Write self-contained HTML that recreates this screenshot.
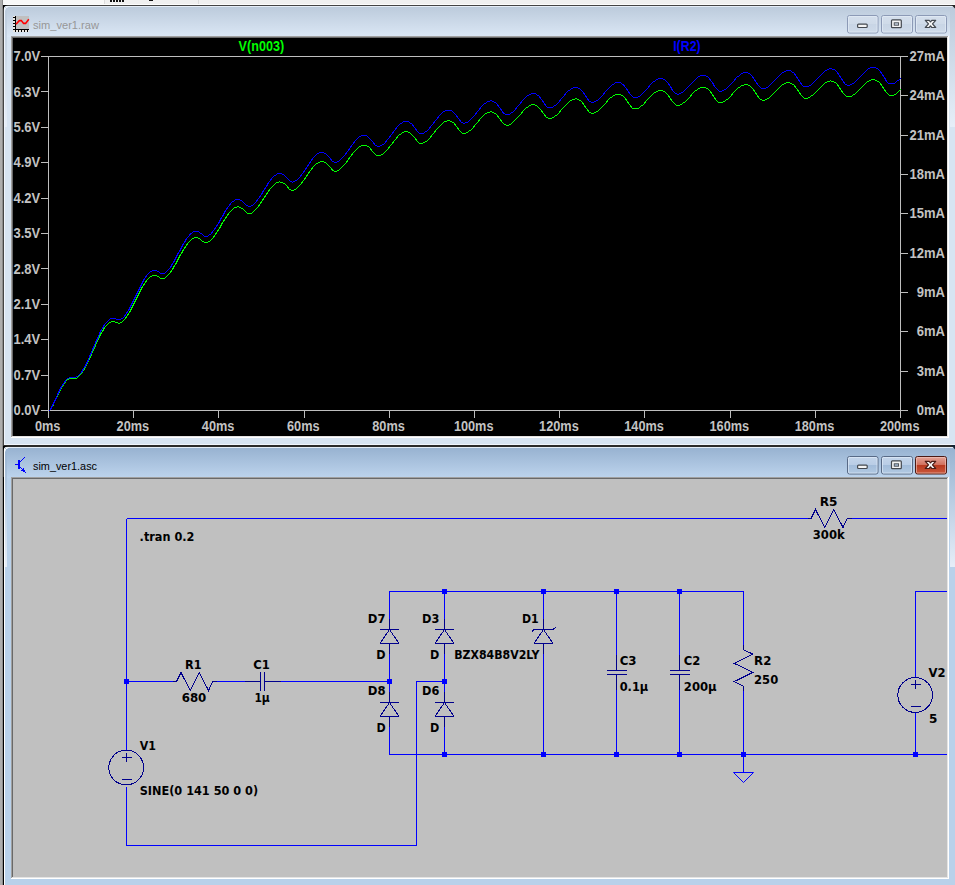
<!DOCTYPE html>
<html><head><meta charset="utf-8"><title>sim_ver1</title>
<style>
html,body{margin:0;padding:0;}
body{width:955px;height:885px;overflow:hidden;background:#f0f0f0;position:relative;font-family:"Liberation Sans",sans-serif;}
svg{position:absolute;left:0;top:0;}
.ax{stroke:#bebebe;stroke-width:1;shape-rendering:crispEdges;fill:none}
.pl{font-family:"Liberation Sans",sans-serif;font-weight:bold;font-size:13px;fill:#c3c3c3}
.w{stroke:#0000ff;stroke-width:1;fill:none;shape-rendering:crispEdges}
.s{stroke:#00008c;stroke-width:1;fill:none;shape-rendering:crispEdges}
.sc{stroke:#00008c;stroke-width:1;fill:none;shape-rendering:crispEdges}
.j{fill:#0000ff;shape-rendering:crispEdges}
.t{font-family:"DejaVu Sans","Liberation Sans",sans-serif;font-weight:bold;font-size:12px;fill:#000}
.tt{font-family:"Liberation Sans",sans-serif;font-size:11.5px}
</style></head><body>
<svg width="955" height="885" viewBox="0 0 955 885">
<defs>
<linearGradient id="t1" x1="0" y1="0" x2="0" y2="1"><stop offset="0" stop-color="#bac9da"/><stop offset="1" stop-color="#dbe7f5"/></linearGradient>
<linearGradient id="t2" x1="0" y1="0" x2="0" y2="1"><stop offset="0" stop-color="#94afce"/><stop offset="1" stop-color="#bdd4ed"/></linearGradient>
<linearGradient id="s2" x1="0" y1="0" x2="0" y2="1"><stop offset="0" stop-color="#98b3d1"/><stop offset="1" stop-color="#e6eef8"/></linearGradient>
<linearGradient id="s1" x1="0" y1="0" x2="0" y2="1"><stop offset="0" stop-color="#bccbdc"/><stop offset="1" stop-color="#e6eef8"/></linearGradient>
<linearGradient id="b1" x1="0" y1="0" x2="0" y2="1"><stop offset="0" stop-color="#d4dfec"/><stop offset="0.5" stop-color="#cfdbe9"/><stop offset="0.5" stop-color="#c8d5e5"/><stop offset="1" stop-color="#cfdbea"/></linearGradient>
<linearGradient id="b2" x1="0" y1="0" x2="0" y2="1"><stop offset="0" stop-color="#c4d5ea"/><stop offset="0.48" stop-color="#b9cde6"/><stop offset="0.5" stop-color="#a2bcda"/><stop offset="1" stop-color="#b3cae3"/></linearGradient>
<linearGradient id="bx" x1="0" y1="0" x2="0" y2="1"><stop offset="0" stop-color="#e4a79c"/><stop offset="0.48" stop-color="#d1705d"/><stop offset="0.5" stop-color="#b8391f"/><stop offset="1" stop-color="#cb5a3f"/></linearGradient>
</defs>

<g shape-rendering="crispEdges">
<rect x="0" y="0" width="955" height="4" fill="#f0f0f0"/><rect x="0" y="4" width="955" height="1" fill="#fdfdfd"/>
<rect x="3" y="0" width="101" height="4" fill="#f8f8f8"/>
<rect x="104" y="0" width="1" height="4" fill="#dcdcdc"/><rect x="198" y="0" width="1" height="4" fill="#dcdcdc"/>
<rect x="110" y="0" width="2" height="2" fill="#111"/>
<rect x="113" y="0" width="2" height="2" fill="#111"/>
<rect x="116" y="0" width="2" height="2" fill="#111"/>
<rect x="119" y="0" width="2" height="2" fill="#111"/>
<rect x="122" y="0" width="2" height="2" fill="#111"/>
<rect x="149" y="0" width="4" height="1" fill="#111"/>
<rect x="3" y="5" width="952" height="440" fill="#d7e4f2"/>
<rect x="3" y="5" width="952" height="32" fill="url(#t1)"/>
<rect x="3" y="5" width="952" height="1" fill="#444"/>
<rect x="4" y="6" width="951" height="1" fill="#e6eef8"/>
<rect x="4" y="444" width="951" height="1" fill="#f0f5fc"/>
<rect x="3" y="445" width="952" height="440" fill="#b9d1ea"/>
<rect x="3" y="445" width="952" height="33" fill="url(#t2)"/>
<rect x="3" y="445" width="952" height="2" fill="#2a2a2a"/>
<rect x="4" y="447" width="951" height="1" fill="#e3edf8"/>
<rect x="0" y="0" width="2" height="885" fill="#adadad"/><rect x="2" y="0" width="1" height="885" fill="#8c8c8c"/>
<rect x="3" y="5" width="1" height="440" fill="#444"/>
<rect x="3" y="445" width="1" height="32" fill="#303030"/><rect x="3" y="477" width="1" height="408" fill="#000"/>
<rect x="4" y="7" width="1" height="438" fill="#f0f5fc"/>
<rect x="4" y="448" width="1" height="437" fill="#fff"/>
<rect x="5" y="7" width="2" height="120" fill="url(#s1)"/><rect x="950" y="7" width="5" height="120" fill="url(#s1)"/>
<rect x="5" y="448" width="2" height="119" fill="url(#s2)"/><rect x="950" y="448" width="5" height="119" fill="url(#s2)"/>
<rect x="11" y="36" width="938" height="402" fill="#fff"/>
<rect x="11" y="36" width="937" height="401" fill="#a0a0a0"/>
<rect x="12" y="37" width="936" height="400" fill="#e3e3e3"/>
<rect x="12" y="37" width="935" height="399" fill="#696969"/>
<rect x="13" y="38" width="934" height="398" fill="#000"/>
<rect x="11" y="477" width="938" height="402" fill="#fff"/>
<rect x="11" y="477" width="937" height="401" fill="#a0a0a0"/>
<rect x="12" y="478" width="936" height="400" fill="#e3e3e3"/>
<rect x="12" y="478" width="935" height="399" fill="#696969"/>
<rect x="13" y="479" width="934" height="398" fill="#c0c0c0"/>
</g>
<path d="M955 5v3.5l-3.5-3.5z" fill="#222"/><path d="M955 445v4.5l-4-4.5z" fill="#123"/>
<path d="M3 5h5q-4 0.6-5 5z" fill="#000"/><path d="M3 446h5q-4 0.6-5 5z" fill="#000"/>
<path d="M8.5 6.5q-3.6 0.6-4 4.5" fill="none" stroke="#eef3fa" stroke-width="1"/><path d="M8.5 447.5q-3.6 0.6-4 4.5" fill="none" stroke="#fff" stroke-width="1"/>
<g shape-rendering="crispEdges"><rect x="13" y="16" width="3" height="16" fill="#ece8e2"/><rect x="13" y="30" width="16" height="2" fill="#ece8e2"/><rect x="16" y="16" width="13" height="13" fill="#c0c0c0"/><rect x="15" y="16" width="1" height="16" fill="#000"/><rect x="13" y="29" width="16" height="1" fill="#000"/>
<rect x="13" y="17" width="2" height="1" fill="#000"/>
<rect x="13" y="20" width="2" height="1" fill="#000"/>
<rect x="13" y="23" width="2" height="1" fill="#000"/>
<rect x="13" y="26" width="2" height="1" fill="#000"/>
<rect x="18" y="30" width="1" height="2" fill="#000"/>
<rect x="21" y="30" width="1" height="2" fill="#000"/>
<rect x="24" y="30" width="1" height="2" fill="#000"/>
<rect x="27" y="30" width="1" height="2" fill="#000"/>
</g><polyline points="16,24.3 19.3,20.6 21.3,20.6 23.6,23.4 25.6,23.4 28.8,19.3" stroke="#f00" stroke-width="1.6" fill="none"/>
<text class="tt" x="33" y="28.5" fill="#979797" textLength="66" lengthAdjust="spacingAndGlyphs">sim_ver1.raw</text>
<g fill="#0000ff" shape-rendering="crispEdges"><rect x="18" y="460" width="2" height="9"/><rect x="15" y="464" width="1" height="1"/><rect x="16" y="464" width="1" height="1"/><rect x="17" y="464" width="1" height="1"/><rect x="20" y="461" width="1" height="1"/><rect x="21" y="460" width="1" height="1"/><rect x="22" y="459" width="1" height="1"/><rect x="23" y="458" width="1" height="1"/><rect x="24" y="457" width="1" height="1"/><rect x="20" y="467" width="1" height="1"/><rect x="21" y="468" width="1" height="1"/><rect x="22" y="469" width="1" height="1"/><rect x="23" y="470" width="1" height="1"/><rect x="24" y="471" width="1" height="1"/><rect x="25" y="472" width="1" height="1"/><rect x="21" y="470" width="1" height="1"/><rect x="22" y="470" width="1" height="1"/><rect x="24" y="470" width="1" height="1"/><rect x="23" y="468" width="1" height="1"/><rect x="23" y="469" width="1" height="1"/><rect x="23" y="471" width="1" height="1"/></g>
<text class="tt" x="33" y="469.7" fill="#000" textLength="64" lengthAdjust="spacingAndGlyphs">sim_ver1.asc</text>
<rect x="847.5" y="15.5" width="30.5" height="17.5" rx="2" fill="url(#b1)" stroke="#8c9ab6" stroke-width="1"/>
<rect x="848.5" y="16.5" width="28.5" height="15.5" rx="1" fill="none" stroke="#e6eef8" stroke-opacity="0.6" stroke-width="1"/>
<rect x="881.5" y="15.5" width="31.0" height="17.5" rx="2" fill="url(#b1)" stroke="#8c9ab6" stroke-width="1"/>
<rect x="882.5" y="16.5" width="29.0" height="15.5" rx="1" fill="none" stroke="#e6eef8" stroke-opacity="0.6" stroke-width="1"/>
<rect x="915.5" y="15.5" width="31.0" height="17.5" rx="2" fill="url(#b1)" stroke="#8c9ab6" stroke-width="1"/>
<rect x="916.5" y="16.5" width="29.0" height="15.5" rx="1" fill="none" stroke="#e6eef8" stroke-opacity="0.6" stroke-width="1"/>
<rect x="857.6" y="24.1" width="9.6" height="3.4" rx="0.9" fill="#f4f4f4" stroke="#43484f" stroke-width="1.2"/>
<rect x="891.5" y="19.9" width="9.8" height="7.8" rx="0.9" fill="#f4f4f4" stroke="#43484f" stroke-width="1.2"/>
<rect x="894.2" y="22.8" width="4.4" height="2.4" fill="#c7d3e2" stroke="#43484f" stroke-width="0.9"/>
<g transform="translate(930.5 23.9)"><path d="M-5.2 -3.6h3.9l1.3 1.6 1.3-1.6h3.9l-3.2 3.6 3.2 3.6h-3.9l-1.3-1.6-1.3 1.6h-3.9l3.2-3.6z" fill="#f6f6f6" stroke="#43484f" stroke-width="1.2" stroke-linejoin="round"/></g>
<rect x="847.5" y="456.5" width="30.5" height="17.5" rx="2" fill="url(#b2)" stroke="#586a86" stroke-width="1"/>
<rect x="848.5" y="457.5" width="28.5" height="15.5" rx="1" fill="none" stroke="#e4eefa" stroke-opacity="0.6" stroke-width="1"/>
<rect x="881.5" y="456.5" width="31.0" height="17.5" rx="2" fill="url(#b2)" stroke="#586a86" stroke-width="1"/>
<rect x="882.5" y="457.5" width="29.0" height="15.5" rx="1" fill="none" stroke="#e4eefa" stroke-opacity="0.6" stroke-width="1"/>
<rect x="915.5" y="456.5" width="31.0" height="17.5" rx="2" fill="url(#bx)" stroke="#4b1a14" stroke-width="1"/>
<rect x="916.5" y="457.5" width="29.0" height="15.5" rx="1" fill="none" stroke="#f3c8c0" stroke-opacity="0.6" stroke-width="1"/>
<rect x="857.6" y="465.1" width="9.6" height="3.4" rx="0.9" fill="#f4f4f4" stroke="#43484f" stroke-width="1.2"/>
<rect x="891.5" y="460.9" width="9.8" height="7.8" rx="0.9" fill="#f4f4f4" stroke="#43484f" stroke-width="1.2"/>
<rect x="894.2" y="463.8" width="4.4" height="2.4" fill="#a9bdd6" stroke="#43484f" stroke-width="0.9"/>
<g transform="translate(930.5 464.9)"><path d="M-5.2 -3.6h3.9l1.3 1.6 1.3-1.6h3.9l-3.2 3.6 3.2 3.6h-3.9l-1.3-1.6-1.3 1.6h-3.9l3.2-3.6z" fill="#f6f6f6" stroke="#4a1c16" stroke-width="1.2" stroke-linejoin="round"/></g>
<g class="ax">
<path d="M41 56.5H908 M48.5 56.5V418 M900.5 56.5V418 M41 410.5H908"/>
<path d="M41 91.5H48.5 M41 127.5H48.5 M41 162.5H48.5 M41 198.5H48.5 M41 233.5H48.5 M41 268.5H48.5 M41 304.5H48.5 M41 339.5H48.5 M41 375.5H48.5 M900.5 371.5H908 M900.5 331.5H908 M900.5 292.5H908 M900.5 253.5H908 M900.5 213.5H908 M900.5 174.5H908 M900.5 135.5H908 M900.5 95.5H908 M133.5 410.5V418 M218.5 410.5V418 M304.5 410.5V418 M389.5 410.5V418 M474.5 410.5V418 M559.5 410.5V418 M644.5 410.5V418 M730.5 410.5V418 M815.5 410.5V418"/>
</g>
<polyline points="48.5,410.5 49.5,410.5 50.5,409.5 51.5,407.5 52.5,406.5 53.5,404.5 54.5,401.5 55.5,399.5 56.5,397.5 57.5,395.5 58.5,393.5 59.5,391.5 60.5,389.5 61.5,387.5 62.5,386.5 63.5,384.5 64.5,383.5 65.5,381.5 66.5,380.5 67.5,379.5 68.5,379.5 69.5,378.5 70.5,378.5 71.5,378.5 72.5,378.5 73.5,378.5 74.5,378.5 75.5,378.5 76.5,378.5 77.5,377.5 78.5,376.5 79.5,375.5 80.5,374.5 81.5,373.5 82.5,371.5 83.5,370.5 84.5,368.5 85.5,366.5 86.5,364.5 87.5,362.5 88.5,360.5 89.5,358.5 90.5,356.5 91.5,354.5 92.5,351.5 93.5,349.5 94.5,347.5 95.5,345.5 96.5,342.5 97.5,340.5 98.5,338.5 99.5,336.5 100.5,334.5 101.5,332.5 102.5,331.5 103.5,329.5 104.5,327.5 105.5,326.5 106.5,325.5 107.5,324.5 108.5,323.5 109.5,322.5 110.5,322.5 111.5,321.5 112.5,321.5 113.5,321.5 114.5,321.5 115.5,322.5 116.5,322.5 117.5,322.5 118.5,323.5 119.5,323.5 120.5,322.5 121.5,322.5 122.5,321.5 123.5,320.5 124.5,319.5 125.5,318.5 126.5,316.5 127.5,315.5 128.5,313.5 129.5,312.5 130.5,310.5 131.5,308.5 132.5,306.5 133.5,304.5 134.5,302.5 135.5,300.5 136.5,298.5 137.5,296.5 138.5,294.5 139.5,292.5 140.5,290.5 141.5,288.5 142.5,286.5 143.5,285.5 144.5,283.5 145.5,282.5 146.5,280.5 147.5,279.5 148.5,278.5 149.5,277.5 150.5,276.5 151.5,276.5 152.5,275.5 153.5,275.5 154.5,275.5 155.5,275.5 156.5,275.5 157.5,276.5 158.5,276.5 159.5,277.5 160.5,278.5 161.5,278.5 162.5,278.5 163.5,278.5 164.5,278.5 165.5,277.5 166.5,276.5 167.5,275.5 168.5,274.5 169.5,273.5 170.5,272.5 171.5,270.5 172.5,269.5 173.5,267.5 174.5,265.5 175.5,264.5 176.5,262.5 177.5,260.5 178.5,258.5 179.5,256.5 180.5,254.5 181.5,253.5 182.5,251.5 183.5,249.5 184.5,248.5 185.5,246.5 186.5,245.5 187.5,243.5 188.5,242.5 189.5,241.5 190.5,240.5 191.5,239.5 192.5,238.5 193.5,238.5 194.5,237.5 195.5,237.5 196.5,237.5 197.5,237.5 198.5,238.5 199.5,238.5 200.5,239.5 201.5,240.5 202.5,241.5 203.5,241.5 204.5,242.5 205.5,242.5 206.5,242.5 207.5,242.5 208.5,241.5 209.5,241.5 210.5,240.5 211.5,239.5 212.5,238.5 213.5,237.5 214.5,235.5 215.5,234.5 216.5,232.5 217.5,231.5 218.5,229.5 219.5,228.5 220.5,226.5 221.5,224.5 222.5,222.5 223.5,221.5 224.5,219.5 225.5,218.5 226.5,216.5 227.5,215.5 228.5,213.5 229.5,212.5 230.5,211.5 231.5,210.5 232.5,209.5 233.5,208.5 234.5,207.5 235.5,207.5 236.5,207.5 237.5,206.5 238.5,206.5 239.5,207.5 240.5,207.5 241.5,208.5 242.5,208.5 243.5,209.5 244.5,210.5 245.5,211.5 246.5,212.5 247.5,213.5 248.5,213.5 249.5,213.5 250.5,213.5 251.5,213.5 252.5,212.5 253.5,211.5 254.5,210.5 255.5,209.5 256.5,208.5 257.5,207.5 258.5,206.5 259.5,204.5 260.5,203.5 261.5,201.5 262.5,200.5 263.5,198.5 264.5,197.5 265.5,195.5 266.5,194.5 267.5,192.5 268.5,191.5 269.5,189.5 270.5,188.5 271.5,187.5 272.5,186.5 273.5,185.5 274.5,184.5 275.5,183.5 276.5,182.5 277.5,182.5 278.5,182.5 279.5,181.5 280.5,182.5 281.5,182.5 282.5,182.5 283.5,183.5 284.5,183.5 285.5,184.5 286.5,185.5 287.5,186.5 288.5,188.5 289.5,189.5 290.5,189.5 291.5,190.5 292.5,190.5 293.5,190.5 294.5,189.5 295.5,189.5 296.5,188.5 297.5,187.5 298.5,186.5 299.5,185.5 300.5,184.5 301.5,183.5 302.5,181.5 303.5,180.5 304.5,179.5 305.5,177.5 306.5,176.5 307.5,174.5 308.5,173.5 309.5,171.5 310.5,170.5 311.5,169.5 312.5,167.5 313.5,166.5 314.5,165.5 315.5,164.5 316.5,163.5 317.5,163.5 318.5,162.5 319.5,162.5 320.5,161.5 321.5,161.5 322.5,161.5 323.5,161.5 324.5,162.5 325.5,162.5 326.5,163.5 327.5,164.5 328.5,165.5 329.5,166.5 330.5,167.5 331.5,168.5 332.5,170.5 333.5,170.5 334.5,171.5 335.5,171.5 336.5,171.5 337.5,170.5 338.5,170.5 339.5,169.5 340.5,168.5 341.5,167.5 342.5,166.5 343.5,165.5 344.5,164.5 345.5,163.5 346.5,162.5 347.5,160.5 348.5,159.5 349.5,157.5 350.5,156.5 351.5,155.5 352.5,153.5 353.5,152.5 354.5,151.5 355.5,150.5 356.5,149.5 357.5,148.5 358.5,147.5 359.5,146.5 360.5,146.5 361.5,145.5 362.5,145.5 363.5,145.5 364.5,145.5 365.5,145.5 366.5,145.5 367.5,146.5 368.5,146.5 369.5,147.5 370.5,148.5 371.5,150.5 372.5,151.5 373.5,152.5 374.5,153.5 375.5,154.5 376.5,155.5 377.5,155.5 378.5,155.5 379.5,155.5 380.5,155.5 381.5,154.5 382.5,154.5 383.5,153.5 384.5,152.5 385.5,151.5 386.5,150.5 387.5,149.5 388.5,148.5 389.5,146.5 390.5,145.5 391.5,144.5 392.5,143.5 393.5,141.5 394.5,140.5 395.5,139.5 396.5,138.5 397.5,136.5 398.5,135.5 399.5,134.5 400.5,134.5 401.5,133.5 402.5,132.5 403.5,132.5 404.5,131.5 405.5,131.5 406.5,131.5 407.5,131.5 408.5,132.5 409.5,132.5 410.5,133.5 411.5,134.5 412.5,135.5 413.5,136.5 414.5,137.5 415.5,138.5 416.5,140.5 417.5,141.5 418.5,142.5 419.5,143.5 420.5,143.5 421.5,143.5 422.5,143.5 423.5,142.5 424.5,142.5 425.5,141.5 426.5,141.5 427.5,140.5 428.5,139.5 429.5,138.5 430.5,137.5 431.5,135.5 432.5,134.5 433.5,133.5 434.5,132.5 435.5,130.5 436.5,129.5 437.5,128.5 438.5,127.5 439.5,126.5 440.5,125.5 441.5,124.5 442.5,123.5 443.5,122.5 444.5,121.5 445.5,121.5 446.5,121.5 447.5,120.5 448.5,120.5 449.5,120.5 450.5,121.5 451.5,121.5 452.5,122.5 453.5,122.5 454.5,123.5 455.5,125.5 456.5,126.5 457.5,127.5 458.5,129.5 459.5,130.5 460.5,131.5 461.5,132.5 462.5,133.5 463.5,133.5 464.5,133.5 465.5,133.5 466.5,132.5 467.5,132.5 468.5,131.5 469.5,130.5 470.5,130.5 471.5,129.5 472.5,128.5 473.5,127.5 474.5,125.5 475.5,124.5 476.5,123.5 477.5,122.5 478.5,121.5 479.5,119.5 480.5,118.5 481.5,117.5 482.5,116.5 483.5,115.5 484.5,114.5 485.5,113.5 486.5,113.5 487.5,112.5 488.5,112.5 489.5,112.5 490.5,111.5 491.5,111.5 492.5,112.5 493.5,112.5 494.5,113.5 495.5,113.5 496.5,114.5 497.5,115.5 498.5,117.5 499.5,118.5 500.5,119.5 501.5,121.5 502.5,122.5 503.5,123.5 504.5,124.5 505.5,124.5 506.5,125.5 507.5,125.5 508.5,125.5 509.5,124.5 510.5,124.5 511.5,123.5 512.5,122.5 513.5,121.5 514.5,120.5 515.5,119.5 516.5,118.5 517.5,117.5 518.5,116.5 519.5,115.5 520.5,114.5 521.5,113.5 522.5,111.5 523.5,110.5 524.5,109.5 525.5,108.5 526.5,107.5 527.5,107.5 528.5,106.5 529.5,105.5 530.5,105.5 531.5,104.5 532.5,104.5 533.5,104.5 534.5,104.5 535.5,105.5 536.5,105.5 537.5,106.5 538.5,107.5 539.5,108.5 540.5,109.5 541.5,110.5 542.5,112.5 543.5,113.5 544.5,114.5 545.5,116.5 546.5,117.5 547.5,117.5 548.5,118.5 549.5,118.5 550.5,118.5 551.5,118.5 552.5,117.5 553.5,117.5 554.5,116.5 555.5,115.5 556.5,115.5 557.5,114.5 558.5,113.5 559.5,112.5 560.5,110.5 561.5,109.5 562.5,108.5 563.5,107.5 564.5,106.5 565.5,105.5 566.5,104.5 567.5,103.5 568.5,102.5 569.5,101.5 570.5,100.5 571.5,100.5 572.5,99.5 573.5,99.5 574.5,99.5 575.5,98.5 576.5,98.5 577.5,99.5 578.5,99.5 579.5,100.5 580.5,100.5 581.5,101.5 582.5,102.5 583.5,104.5 584.5,105.5 585.5,107.5 586.5,108.5 587.5,109.5 588.5,111.5 589.5,112.5 590.5,112.5 591.5,113.5 592.5,113.5 593.5,113.5 594.5,112.5 595.5,112.5 596.5,111.5 597.5,111.5 598.5,110.5 599.5,109.5 600.5,108.5 601.5,107.5 602.5,106.5 603.5,105.5 604.5,104.5 605.5,103.5 606.5,102.5 607.5,100.5 608.5,99.5 609.5,98.5 610.5,97.5 611.5,97.5 612.5,96.5 613.5,95.5 614.5,95.5 615.5,94.5 616.5,94.5 617.5,94.5 618.5,94.5 619.5,94.5 620.5,94.5 621.5,95.5 622.5,95.5 623.5,96.5 624.5,97.5 625.5,98.5 626.5,100.5 627.5,101.5 628.5,103.5 629.5,104.5 630.5,105.5 631.5,107.5 632.5,108.5 633.5,108.5 634.5,108.5 635.5,108.5 636.5,108.5 637.5,108.5 638.5,108.5 639.5,107.5 640.5,106.5 641.5,105.5 642.5,105.5 643.5,104.5 644.5,103.5 645.5,101.5 646.5,100.5 647.5,99.5 648.5,98.5 649.5,97.5 650.5,96.5 651.5,95.5 652.5,94.5 653.5,93.5 654.5,92.5 655.5,92.5 656.5,91.5 657.5,91.5 658.5,90.5 659.5,90.5 660.5,90.5 661.5,90.5 662.5,90.5 663.5,91.5 664.5,91.5 665.5,92.5 666.5,93.5 667.5,94.5 668.5,95.5 669.5,97.5 670.5,98.5 671.5,100.5 672.5,101.5 673.5,102.5 674.5,103.5 675.5,104.5 676.5,105.5 677.5,105.5 678.5,105.5 679.5,105.5 680.5,104.5 681.5,104.5 682.5,103.5 683.5,102.5 684.5,102.5 685.5,101.5 686.5,100.5 687.5,99.5 688.5,98.5 689.5,97.5 690.5,96.5 691.5,94.5 692.5,93.5 693.5,92.5 694.5,91.5 695.5,90.5 696.5,90.5 697.5,89.5 698.5,88.5 699.5,88.5 700.5,87.5 701.5,87.5 702.5,87.5 703.5,87.5 704.5,87.5 705.5,87.5 706.5,88.5 707.5,88.5 708.5,89.5 709.5,90.5 710.5,91.5 711.5,93.5 712.5,94.5 713.5,96.5 714.5,97.5 715.5,99.5 716.5,100.5 717.5,101.5 718.5,102.5 719.5,102.5 720.5,102.5 721.5,102.5 722.5,102.5 723.5,101.5 724.5,101.5 725.5,100.5 726.5,99.5 727.5,99.5 728.5,98.5 729.5,97.5 730.5,96.5 731.5,95.5 732.5,93.5 733.5,92.5 734.5,91.5 735.5,90.5 736.5,89.5 737.5,88.5 738.5,87.5 739.5,87.5 740.5,86.5 741.5,85.5 742.5,85.5 743.5,85.5 744.5,84.5 745.5,84.5 746.5,84.5 747.5,84.5 748.5,85.5 749.5,85.5 750.5,86.5 751.5,87.5 752.5,88.5 753.5,89.5 754.5,91.5 755.5,92.5 756.5,94.5 757.5,95.5 758.5,97.5 759.5,98.5 760.5,99.5 761.5,99.5 762.5,100.5 763.5,100.5 764.5,100.5 765.5,99.5 766.5,99.5 767.5,98.5 768.5,98.5 769.5,97.5 770.5,96.5 771.5,95.5 772.5,94.5 773.5,93.5 774.5,92.5 775.5,91.5 776.5,90.5 777.5,89.5 778.5,88.5 779.5,87.5 780.5,86.5 781.5,85.5 782.5,84.5 783.5,84.5 784.5,83.5 785.5,83.5 786.5,82.5 787.5,82.5 788.5,82.5 789.5,82.5 790.5,83.5 791.5,83.5 792.5,84.5 793.5,84.5 794.5,85.5 795.5,87.5 796.5,88.5 797.5,89.5 798.5,91.5 799.5,92.5 800.5,94.5 801.5,95.5 802.5,96.5 803.5,97.5 804.5,98.5 805.5,98.5 806.5,98.5 807.5,98.5 808.5,97.5 809.5,97.5 810.5,96.5 811.5,95.5 812.5,95.5 813.5,94.5 814.5,93.5 815.5,92.5 816.5,91.5 817.5,90.5 818.5,89.5 819.5,88.5 820.5,87.5 821.5,86.5 822.5,85.5 823.5,84.5 824.5,83.5 825.5,82.5 826.5,82.5 827.5,81.5 828.5,81.5 829.5,81.5 830.5,80.5 831.5,81.5 832.5,81.5 833.5,81.5 834.5,82.5 835.5,82.5 836.5,83.5 837.5,84.5 838.5,86.5 839.5,87.5 840.5,89.5 841.5,90.5 842.5,92.5 843.5,93.5 844.5,94.5 845.5,95.5 846.5,96.5 847.5,96.5 848.5,96.5 849.5,96.5 850.5,96.5 851.5,96.5 852.5,95.5 853.5,94.5 854.5,94.5 855.5,93.5 856.5,92.5 857.5,91.5 858.5,90.5 859.5,89.5 860.5,88.5 861.5,87.5 862.5,86.5 863.5,85.5 864.5,84.5 865.5,83.5 866.5,82.5 867.5,81.5 868.5,81.5 869.5,80.5 870.5,80.5 871.5,79.5 872.5,79.5 873.5,79.5 874.5,79.5 875.5,80.5 876.5,80.5 877.5,81.5 878.5,81.5 879.5,82.5 880.5,83.5 881.5,85.5 882.5,86.5 883.5,88.5 884.5,89.5 885.5,91.5 886.5,92.5 887.5,93.5 888.5,94.5 889.5,95.5 890.5,95.5 891.5,95.5 892.5,95.5 893.5,95.5 894.5,94.5 895.5,94.5 896.5,93.5 897.5,92.5 898.5,91.5 899.5,90.5 900.5,89.5" fill="none" stroke="#00ff00" stroke-width="1" shape-rendering="crispEdges"/>
<polyline points="48.5,410.5 49.5,410.5 50.5,409.5 51.5,407.5 52.5,405.5 53.5,403.5 54.5,401.5 55.5,399.5 56.5,397.5 57.5,394.5 58.5,392.5 59.5,390.5 60.5,388.5 61.5,386.5 62.5,385.5 63.5,383.5 64.5,382.5 65.5,380.5 66.5,379.5 67.5,378.5 68.5,378.5 69.5,377.5 70.5,377.5 71.5,377.5 72.5,377.5 73.5,377.5 74.5,377.5 75.5,377.5 76.5,376.5 77.5,376.5 78.5,375.5 79.5,374.5 80.5,373.5 81.5,372.5 82.5,370.5 83.5,368.5 84.5,367.5 85.5,365.5 86.5,363.5 87.5,361.5 88.5,359.5 89.5,356.5 90.5,354.5 91.5,352.5 92.5,349.5 93.5,347.5 94.5,345.5 95.5,342.5 96.5,340.5 97.5,338.5 98.5,336.5 99.5,333.5 100.5,331.5 101.5,329.5 102.5,328.5 103.5,326.5 104.5,324.5 105.5,323.5 106.5,322.5 107.5,321.5 108.5,320.5 109.5,319.5 110.5,318.5 111.5,318.5 112.5,318.5 113.5,318.5 114.5,318.5 115.5,318.5 116.5,319.5 117.5,319.5 118.5,319.5 119.5,319.5 120.5,319.5 121.5,318.5 122.5,318.5 123.5,317.5 124.5,316.5 125.5,314.5 126.5,313.5 127.5,311.5 128.5,310.5 129.5,308.5 130.5,306.5 131.5,304.5 132.5,302.5 133.5,300.5 134.5,298.5 135.5,296.5 136.5,294.5 137.5,292.5 138.5,290.5 139.5,288.5 140.5,286.5 141.5,284.5 142.5,282.5 143.5,280.5 144.5,278.5 145.5,277.5 146.5,275.5 147.5,274.5 148.5,273.5 149.5,272.5 150.5,271.5 151.5,271.5 152.5,270.5 153.5,270.5 154.5,270.5 155.5,270.5 156.5,270.5 157.5,271.5 158.5,271.5 159.5,272.5 160.5,273.5 161.5,273.5 162.5,273.5 163.5,273.5 164.5,273.5 165.5,272.5 166.5,271.5 167.5,270.5 168.5,269.5 169.5,268.5 170.5,267.5 171.5,265.5 172.5,263.5 173.5,262.5 174.5,260.5 175.5,258.5 176.5,256.5 177.5,254.5 178.5,252.5 179.5,251.5 180.5,249.5 181.5,247.5 182.5,245.5 183.5,243.5 184.5,242.5 185.5,240.5 186.5,238.5 187.5,237.5 188.5,236.5 189.5,235.5 190.5,233.5 191.5,233.5 192.5,232.5 193.5,231.5 194.5,231.5 195.5,231.5 196.5,231.5 197.5,231.5 198.5,231.5 199.5,232.5 200.5,233.5 201.5,233.5 202.5,234.5 203.5,235.5 204.5,236.5 205.5,236.5 206.5,236.5 207.5,236.5 208.5,235.5 209.5,234.5 210.5,234.5 211.5,233.5 212.5,231.5 213.5,230.5 214.5,229.5 215.5,227.5 216.5,226.5 217.5,224.5 218.5,223.5 219.5,221.5 220.5,219.5 221.5,217.5 222.5,216.5 223.5,214.5 224.5,212.5 225.5,210.5 226.5,209.5 227.5,207.5 228.5,206.5 229.5,205.5 230.5,203.5 231.5,202.5 232.5,201.5 233.5,201.5 234.5,200.5 235.5,199.5 236.5,199.5 237.5,199.5 238.5,199.5 239.5,199.5 240.5,200.5 241.5,200.5 242.5,201.5 243.5,202.5 244.5,203.5 245.5,204.5 246.5,205.5 247.5,205.5 248.5,206.5 249.5,206.5 250.5,206.5 251.5,205.5 252.5,205.5 253.5,204.5 254.5,203.5 255.5,202.5 256.5,201.5 257.5,199.5 258.5,198.5 259.5,197.5 260.5,195.5 261.5,194.5 262.5,192.5 263.5,190.5 264.5,189.5 265.5,187.5 266.5,186.5 267.5,184.5 268.5,182.5 269.5,181.5 270.5,180.5 271.5,178.5 272.5,177.5 273.5,176.5 274.5,175.5 275.5,175.5 276.5,174.5 277.5,173.5 278.5,173.5 279.5,173.5 280.5,173.5 281.5,173.5 282.5,174.5 283.5,174.5 284.5,175.5 285.5,176.5 286.5,177.5 287.5,178.5 288.5,179.5 289.5,180.5 290.5,181.5 291.5,181.5 292.5,182.5 293.5,181.5 294.5,181.5 295.5,180.5 296.5,180.5 297.5,179.5 298.5,178.5 299.5,177.5 300.5,176.5 301.5,174.5 302.5,173.5 303.5,172.5 304.5,170.5 305.5,169.5 306.5,167.5 307.5,166.5 308.5,164.5 309.5,163.5 310.5,161.5 311.5,160.5 312.5,158.5 313.5,157.5 314.5,156.5 315.5,155.5 316.5,154.5 317.5,153.5 318.5,153.5 319.5,152.5 320.5,152.5 321.5,152.5 322.5,152.5 323.5,152.5 324.5,153.5 325.5,153.5 326.5,154.5 327.5,155.5 328.5,156.5 329.5,157.5 330.5,158.5 331.5,160.5 332.5,161.5 333.5,161.5 334.5,162.5 335.5,162.5 336.5,162.5 337.5,161.5 338.5,161.5 339.5,160.5 340.5,159.5 341.5,158.5 342.5,157.5 343.5,156.5 344.5,155.5 345.5,154.5 346.5,152.5 347.5,151.5 348.5,150.5 349.5,148.5 350.5,147.5 351.5,145.5 352.5,144.5 353.5,143.5 354.5,141.5 355.5,140.5 356.5,139.5 357.5,138.5 358.5,137.5 359.5,136.5 360.5,136.5 361.5,135.5 362.5,135.5 363.5,135.5 364.5,135.5 365.5,135.5 366.5,135.5 367.5,136.5 368.5,137.5 369.5,138.5 370.5,139.5 371.5,140.5 372.5,141.5 373.5,142.5 374.5,144.5 375.5,145.5 376.5,145.5 377.5,146.5 378.5,146.5 379.5,146.5 380.5,145.5 381.5,145.5 382.5,144.5 383.5,144.5 384.5,143.5 385.5,142.5 386.5,140.5 387.5,139.5 388.5,138.5 389.5,137.5 390.5,135.5 391.5,134.5 392.5,133.5 393.5,131.5 394.5,130.5 395.5,129.5 396.5,127.5 397.5,126.5 398.5,125.5 399.5,124.5 400.5,123.5 401.5,123.5 402.5,122.5 403.5,121.5 404.5,121.5 405.5,121.5 406.5,121.5 407.5,121.5 408.5,121.5 409.5,122.5 410.5,123.5 411.5,123.5 412.5,124.5 413.5,126.5 414.5,127.5 415.5,128.5 416.5,130.5 417.5,131.5 418.5,132.5 419.5,133.5 420.5,133.5 421.5,133.5 422.5,133.5 423.5,133.5 424.5,132.5 425.5,131.5 426.5,131.5 427.5,130.5 428.5,129.5 429.5,128.5 430.5,126.5 431.5,125.5 432.5,124.5 433.5,123.5 434.5,121.5 435.5,120.5 436.5,119.5 437.5,118.5 438.5,116.5 439.5,115.5 440.5,114.5 441.5,113.5 442.5,112.5 443.5,111.5 444.5,111.5 445.5,110.5 446.5,110.5 447.5,110.5 448.5,110.5 449.5,110.5 450.5,110.5 451.5,110.5 452.5,111.5 453.5,112.5 454.5,113.5 455.5,114.5 456.5,115.5 457.5,117.5 458.5,118.5 459.5,119.5 460.5,121.5 461.5,122.5 462.5,122.5 463.5,123.5 464.5,123.5 465.5,122.5 466.5,122.5 467.5,122.5 468.5,121.5 469.5,120.5 470.5,119.5 471.5,118.5 472.5,117.5 473.5,116.5 474.5,115.5 475.5,114.5 476.5,112.5 477.5,111.5 478.5,110.5 479.5,109.5 480.5,107.5 481.5,106.5 482.5,105.5 483.5,104.5 484.5,103.5 485.5,103.5 486.5,102.5 487.5,101.5 488.5,101.5 489.5,101.5 490.5,100.5 491.5,100.5 492.5,101.5 493.5,101.5 494.5,102.5 495.5,102.5 496.5,103.5 497.5,104.5 498.5,106.5 499.5,107.5 500.5,108.5 501.5,110.5 502.5,111.5 503.5,113.5 504.5,113.5 505.5,114.5 506.5,114.5 507.5,114.5 508.5,114.5 509.5,114.5 510.5,113.5 511.5,112.5 512.5,112.5 513.5,111.5 514.5,110.5 515.5,109.5 516.5,107.5 517.5,106.5 518.5,105.5 519.5,104.5 520.5,103.5 521.5,101.5 522.5,100.5 523.5,99.5 524.5,98.5 525.5,97.5 526.5,96.5 527.5,95.5 528.5,95.5 529.5,94.5 530.5,94.5 531.5,93.5 532.5,93.5 533.5,93.5 534.5,93.5 535.5,93.5 536.5,94.5 537.5,95.5 538.5,95.5 539.5,96.5 540.5,98.5 541.5,99.5 542.5,100.5 543.5,102.5 544.5,103.5 545.5,105.5 546.5,106.5 547.5,107.5 548.5,107.5 549.5,107.5 550.5,107.5 551.5,107.5 552.5,107.5 553.5,106.5 554.5,105.5 555.5,105.5 556.5,104.5 557.5,103.5 558.5,102.5 559.5,101.5 560.5,99.5 561.5,98.5 562.5,97.5 563.5,96.5 564.5,95.5 565.5,93.5 566.5,92.5 567.5,91.5 568.5,90.5 569.5,90.5 570.5,89.5 571.5,88.5 572.5,88.5 573.5,87.5 574.5,87.5 575.5,87.5 576.5,87.5 577.5,87.5 578.5,88.5 579.5,88.5 580.5,89.5 581.5,90.5 582.5,91.5 583.5,92.5 584.5,94.5 585.5,95.5 586.5,97.5 587.5,98.5 588.5,100.5 589.5,101.5 590.5,101.5 591.5,102.5 592.5,102.5 593.5,102.5 594.5,101.5 595.5,101.5 596.5,100.5 597.5,100.5 598.5,99.5 599.5,98.5 600.5,97.5 601.5,96.5 602.5,95.5 603.5,94.5 604.5,92.5 605.5,91.5 606.5,90.5 607.5,89.5 608.5,88.5 609.5,87.5 610.5,86.5 611.5,85.5 612.5,84.5 613.5,84.5 614.5,83.5 615.5,82.5 616.5,82.5 617.5,82.5 618.5,82.5 619.5,82.5 620.5,82.5 621.5,83.5 622.5,84.5 623.5,84.5 624.5,86.5 625.5,87.5 626.5,88.5 627.5,90.5 628.5,91.5 629.5,93.5 630.5,94.5 631.5,95.5 632.5,96.5 633.5,97.5 634.5,97.5 635.5,97.5 636.5,97.5 637.5,97.5 638.5,96.5 639.5,96.5 640.5,95.5 641.5,94.5 642.5,93.5 643.5,92.5 644.5,91.5 645.5,90.5 646.5,89.5 647.5,88.5 648.5,87.5 649.5,85.5 650.5,84.5 651.5,83.5 652.5,82.5 653.5,81.5 654.5,81.5 655.5,80.5 656.5,79.5 657.5,79.5 658.5,78.5 659.5,78.5 660.5,78.5 661.5,78.5 662.5,78.5 663.5,79.5 664.5,79.5 665.5,80.5 666.5,81.5 667.5,82.5 668.5,83.5 669.5,85.5 670.5,86.5 671.5,88.5 672.5,90.5 673.5,91.5 674.5,92.5 675.5,93.5 676.5,93.5 677.5,94.5 678.5,94.5 679.5,93.5 680.5,93.5 681.5,92.5 682.5,92.5 683.5,91.5 684.5,90.5 685.5,89.5 686.5,88.5 687.5,87.5 688.5,86.5 689.5,85.5 690.5,84.5 691.5,83.5 692.5,82.5 693.5,81.5 694.5,80.5 695.5,79.5 696.5,78.5 697.5,77.5 698.5,76.5 699.5,76.5 700.5,75.5 701.5,75.5 702.5,75.5 703.5,75.5 704.5,75.5 705.5,75.5 706.5,76.5 707.5,76.5 708.5,77.5 709.5,78.5 710.5,80.5 711.5,81.5 712.5,82.5 713.5,84.5 714.5,86.5 715.5,87.5 716.5,88.5 717.5,89.5 718.5,90.5 719.5,91.5 720.5,91.5 721.5,91.5 722.5,90.5 723.5,90.5 724.5,89.5 725.5,89.5 726.5,88.5 727.5,87.5 728.5,86.5 729.5,85.5 730.5,84.5 731.5,83.5 732.5,82.5 733.5,81.5 734.5,80.5 735.5,78.5 736.5,77.5 737.5,76.5 738.5,76.5 739.5,75.5 740.5,74.5 741.5,73.5 742.5,73.5 743.5,72.5 744.5,72.5 745.5,72.5 746.5,72.5 747.5,72.5 748.5,73.5 749.5,73.5 750.5,74.5 751.5,75.5 752.5,76.5 753.5,78.5 754.5,79.5 755.5,81.5 756.5,82.5 757.5,84.5 758.5,85.5 759.5,86.5 760.5,87.5 761.5,88.5 762.5,88.5 763.5,88.5 764.5,88.5 765.5,88.5 766.5,87.5 767.5,87.5 768.5,86.5 769.5,85.5 770.5,84.5 771.5,83.5 772.5,82.5 773.5,81.5 774.5,80.5 775.5,79.5 776.5,78.5 777.5,77.5 778.5,76.5 779.5,75.5 780.5,74.5 781.5,73.5 782.5,72.5 783.5,72.5 784.5,71.5 785.5,71.5 786.5,70.5 787.5,70.5 788.5,70.5 789.5,70.5 790.5,70.5 791.5,71.5 792.5,72.5 793.5,72.5 794.5,73.5 795.5,75.5 796.5,76.5 797.5,78.5 798.5,79.5 799.5,81.5 800.5,82.5 801.5,84.5 802.5,85.5 803.5,86.5 804.5,86.5 805.5,86.5 806.5,86.5 807.5,86.5 808.5,86.5 809.5,85.5 810.5,85.5 811.5,84.5 812.5,83.5 813.5,82.5 814.5,81.5 815.5,80.5 816.5,79.5 817.5,78.5 818.5,77.5 819.5,76.5 820.5,75.5 821.5,74.5 822.5,73.5 823.5,72.5 824.5,71.5 825.5,70.5 826.5,70.5 827.5,69.5 828.5,69.5 829.5,68.5 830.5,68.5 831.5,68.5 832.5,69.5 833.5,69.5 834.5,69.5 835.5,70.5 836.5,71.5 837.5,72.5 838.5,74.5 839.5,75.5 840.5,77.5 841.5,78.5 842.5,80.5 843.5,81.5 844.5,83.5 845.5,84.5 846.5,84.5 847.5,85.5 848.5,85.5 849.5,85.5 850.5,84.5 851.5,84.5 852.5,83.5 853.5,83.5 854.5,82.5 855.5,81.5 856.5,80.5 857.5,79.5 858.5,78.5 859.5,77.5 860.5,76.5 861.5,75.5 862.5,74.5 863.5,73.5 864.5,72.5 865.5,71.5 866.5,70.5 867.5,69.5 868.5,68.5 869.5,68.5 870.5,67.5 871.5,67.5 872.5,67.5 873.5,67.5 874.5,67.5 875.5,67.5 876.5,68.5 877.5,68.5 878.5,69.5 879.5,70.5 880.5,71.5 881.5,73.5 882.5,74.5 883.5,76.5 884.5,77.5 885.5,79.5 886.5,81.5 887.5,82.5 888.5,83.5 889.5,83.5 890.5,83.5 891.5,83.5 892.5,83.5 893.5,83.5 894.5,83.5 895.5,82.5 896.5,81.5 897.5,80.5 898.5,80.5 899.5,79.5 900.5,78.5" fill="none" stroke="#0000ff" stroke-width="1" shape-rendering="crispEdges"/>
<text class="pl" transform="translate(40.2 61.2) scale(1 1.07)" text-anchor="end">7.0V</text>
<text class="pl" transform="translate(40.2 96.6) scale(1 1.07)" text-anchor="end">6.3V</text>
<text class="pl" transform="translate(40.2 132.0) scale(1 1.07)" text-anchor="end">5.6V</text>
<text class="pl" transform="translate(40.2 167.4) scale(1 1.07)" text-anchor="end">4.9V</text>
<text class="pl" transform="translate(40.2 202.8) scale(1 1.07)" text-anchor="end">4.2V</text>
<text class="pl" transform="translate(40.2 238.2) scale(1 1.07)" text-anchor="end">3.5V</text>
<text class="pl" transform="translate(40.2 273.6) scale(1 1.07)" text-anchor="end">2.8V</text>
<text class="pl" transform="translate(40.2 309.0) scale(1 1.07)" text-anchor="end">2.1V</text>
<text class="pl" transform="translate(40.2 344.4) scale(1 1.07)" text-anchor="end">1.4V</text>
<text class="pl" transform="translate(40.2 379.8) scale(1 1.07)" text-anchor="end">0.7V</text>
<text class="pl" transform="translate(40.2 415.2) scale(1 1.07)" text-anchor="end">0.0V</text>
<text class="pl" transform="translate(945 61.1) scale(1 1.07)" text-anchor="end">27mA</text>
<text class="pl" transform="translate(945 100.4) scale(1 1.07)" text-anchor="end">24mA</text>
<text class="pl" transform="translate(945 139.8) scale(1 1.07)" text-anchor="end">21mA</text>
<text class="pl" transform="translate(945 179.1) scale(1 1.07)" text-anchor="end">18mA</text>
<text class="pl" transform="translate(945 218.4) scale(1 1.07)" text-anchor="end">15mA</text>
<text class="pl" transform="translate(945 257.8) scale(1 1.07)" text-anchor="end">12mA</text>
<text class="pl" transform="translate(945 297.1) scale(1 1.07)" text-anchor="end">9mA</text>
<text class="pl" transform="translate(945 336.4) scale(1 1.07)" text-anchor="end">6mA</text>
<text class="pl" transform="translate(945 375.8) scale(1 1.07)" text-anchor="end">3mA</text>
<text class="pl" transform="translate(945 415.1) scale(1 1.07)" text-anchor="end">0mA</text>
<text class="pl" transform="translate(47.7 430.8) scale(0.98 1.07)" text-anchor="middle">0ms</text>
<text class="pl" transform="translate(132.9 430.8) scale(0.98 1.07)" text-anchor="middle">20ms</text>
<text class="pl" transform="translate(218.1 430.8) scale(0.98 1.07)" text-anchor="middle">40ms</text>
<text class="pl" transform="translate(303.3 430.8) scale(0.98 1.07)" text-anchor="middle">60ms</text>
<text class="pl" transform="translate(388.5 430.8) scale(0.98 1.07)" text-anchor="middle">80ms</text>
<text class="pl" transform="translate(473.7 430.8) scale(0.98 1.07)" text-anchor="middle">100ms</text>
<text class="pl" transform="translate(558.9 430.8) scale(0.98 1.07)" text-anchor="middle">120ms</text>
<text class="pl" transform="translate(644.1 430.8) scale(0.98 1.07)" text-anchor="middle">140ms</text>
<text class="pl" transform="translate(729.3 430.8) scale(0.98 1.07)" text-anchor="middle">160ms</text>
<text class="pl" transform="translate(814.5 430.8) scale(0.98 1.07)" text-anchor="middle">180ms</text>
<text class="pl" transform="translate(899.7 430.8) scale(0.98 1.07)" text-anchor="middle">200ms</text>
<text class="pl" transform="translate(238.6 50.9) scale(1 1.07)" style="fill:#00ff00" textLength="45.5" lengthAdjust="spacingAndGlyphs">V(n003)</text>
<text class="pl" transform="translate(673.2 50.9) scale(1 1.07)" style="fill:#0000ff" textLength="27.4" lengthAdjust="spacingAndGlyphs">I(R2)</text>
<g class="w">
<path d="M126.5 518.5H811 M852 518.5H947"/>
<path d="M126.5 518.5V749.5 M126.5 786.5V845.5H416.5V681.5H444.5"/>
<path d="M126.5 681.5H173.5 M217 681.5H245 M280.5 681.5H389.5"/>
<path d="M389.5 619V591.5H743.5V645"/>
<path d="M389.5 654V692 M389.5 726V754.5H947"/>
<path d="M444.5 591.5V619 M444.5 654V692 M444.5 726V754.5"/>
<path d="M543.5 591.5V619 M543.5 654V754.5"/>
<path d="M616.5 591.5V655 M616.5 690V754.5"/>
<path d="M679.5 591.5V655 M679.5 690V754.5"/>
<path d="M743.5 691V772.5"/>
<path d="M947 591.5H915.5V677 M915.5 713V754.5"/>
</g>
<path class="w" style="shape-rendering:auto" d="M733.5 772.5H753.5L743.5 782.5Z"/>
<rect class="j" x="124" y="679" width="5" height="5"/>
<rect class="j" x="387" y="679" width="5" height="5"/>
<rect class="j" x="442" y="679" width="5" height="5"/>
<rect class="j" x="442" y="589" width="5" height="5"/>
<rect class="j" x="541" y="589" width="5" height="5"/>
<rect class="j" x="614" y="589" width="5" height="5"/>
<rect class="j" x="677" y="589" width="5" height="5"/>
<rect class="j" x="442" y="752" width="5" height="5"/>
<rect class="j" x="541" y="752" width="5" height="5"/>
<rect class="j" x="614" y="752" width="5" height="5"/>
<rect class="j" x="677" y="752" width="5" height="5"/>
<rect class="j" x="741" y="752" width="5" height="5"/>
<rect class="j" x="913" y="752" width="5" height="5"/>
<polyline class="s" points="173.0,681.5 176.5,681.5 181.0,672.5 190.2,690.5 199.3,672.5 208.5,690.5 212.8,681.5 217.0,681.5"/>
<polyline class="s" points="807.5,518.5 811.0,518.5 815.5,509.5 824.7,527.5 833.8,509.5 843.0,527.5 847.3,518.5 851.5,518.5"/>
<polyline class="s" points="743.5,645.0 743.5,649.6 752.8,654.2 734.2,663.3 752.8,672.4 734.2,681.6 743.5,686.2 743.5,691.0"/>
<path class="sc" d="M245 681.5H261 M264.5 681.5H280.5 M260.5 672V691 M264.5 672V691"/>
<path class="sc" d="M616.5 655V671 M616.5 675V690 M606.5 670.5H626.5 M606.5 674.5H626.5"/>
<path class="sc" d="M679.5 655V671 M679.5 675V690 M669.5 670.5H689.5 M669.5 674.5H689.5"/>
<path class="sc" d="M389.5 619.0V629.5 M389.5 643.5V654.0 M380.0 629.5H399.0 M380.0 643.5H399.0"/>
<path class="s" d="M380.0 643.5L389.5 629.5L399.0 643.5"/>
<path class="sc" d="M444.5 619.0V629.5 M444.5 643.5V654.0 M435.0 629.5H454.0 M435.0 643.5H454.0"/>
<path class="s" d="M435.0 643.5L444.5 629.5L454.0 643.5"/>
<path class="sc" d="M543.5 619.0V629.5 M543.5 643.5V654.0 M534.0 629.5H553.0 M534.0 643.5H553.0"/>
<path class="s" d="M534.0 643.5L543.5 629.5L553.0 643.5"/>
<path class="s" d="M534.0 629.5l-2 2.4 M553.0 629.5l3 -2.4"/>
<path class="sc" d="M389.5 692.0V702.5 M389.5 716.5V727.0 M380.0 702.5H399.0 M380.0 716.5H399.0"/>
<path class="s" d="M380.0 716.5L389.5 702.5L399.0 716.5"/>
<path class="sc" d="M444.5 692.0V702.5 M444.5 716.5V727.0 M435.0 702.5H454.0 M435.0 716.5H454.0"/>
<path class="s" d="M435.0 716.5L444.5 702.5L454.0 716.5"/>
<circle class="s" cx="126.2" cy="767.5" r="17.4"/>
<path class="sc" d="M122.0 757.5H132.0 M126.5 753.0V762.0 M122.0 779.5H132.0"/>
<circle class="s" cx="915.2" cy="695" r="17.4"/>
<path class="sc" d="M911.0 684.5H921.0 M915.5 680.0V689.0 M911.0 706.5H921.0"/>
<text class="t" x="139.6" y="541.3" textLength="54.8" lengthAdjust="spacingAndGlyphs">.tran 0.2</text>
<text class="t" x="185.1" y="668.6" textLength="16.5" lengthAdjust="spacingAndGlyphs">R1</text>
<text class="t" x="181.7" y="701.9" textLength="24.6" lengthAdjust="spacingAndGlyphs">680</text>
<text class="t" x="253.2" y="668.6" textLength="16.6" lengthAdjust="spacingAndGlyphs">C1</text>
<text class="t" x="254.4" y="701.9" textLength="15.4" lengthAdjust="spacingAndGlyphs">1µ</text>
<text class="t" x="367.8" y="622.6" textLength="17.7" lengthAdjust="spacingAndGlyphs">D7</text>
<text class="t" x="376.2" y="659.0" textLength="9.3" lengthAdjust="spacingAndGlyphs">D</text>
<text class="t" x="422.0" y="622.6" textLength="17.3" lengthAdjust="spacingAndGlyphs">D3</text>
<text class="t" x="430.0" y="659.0" textLength="9.3" lengthAdjust="spacingAndGlyphs">D</text>
<text class="t" x="522.0" y="622.6" textLength="16.7" lengthAdjust="spacingAndGlyphs">D1</text>
<text class="t" x="454.2" y="659.0" textLength="85.3" lengthAdjust="spacingAndGlyphs">BZX84B8V2LY</text>
<text class="t" x="367.8" y="694.5" textLength="17.8" lengthAdjust="spacingAndGlyphs">D8</text>
<text class="t" x="422.0" y="694.5" textLength="17.3" lengthAdjust="spacingAndGlyphs">D6</text>
<text class="t" x="376.4" y="731.6" textLength="9.2" lengthAdjust="spacingAndGlyphs">D</text>
<text class="t" x="430.0" y="731.6" textLength="9.3" lengthAdjust="spacingAndGlyphs">D</text>
<text class="t" x="619.7" y="664.5" textLength="16.9" lengthAdjust="spacingAndGlyphs">C3</text>
<text class="t" x="619.7" y="691.1" textLength="28.5" lengthAdjust="spacingAndGlyphs">0.1µ</text>
<text class="t" x="683.8" y="664.5" textLength="16.6" lengthAdjust="spacingAndGlyphs">C2</text>
<text class="t" x="683.8" y="691.1" textLength="32.8" lengthAdjust="spacingAndGlyphs">200µ</text>
<text class="t" x="754.1" y="664.5" textLength="17.2" lengthAdjust="spacingAndGlyphs">R2</text>
<text class="t" x="754.1" y="683.9" textLength="24.1" lengthAdjust="spacingAndGlyphs">250</text>
<text class="t" x="819.7" y="505.7" textLength="17.7" lengthAdjust="spacingAndGlyphs">R5</text>
<text class="t" x="812.8" y="539.0" textLength="31.9" lengthAdjust="spacingAndGlyphs">300k</text>
<text class="t" x="139.7" y="750.0" textLength="16.2" lengthAdjust="spacingAndGlyphs">V1</text>
<text class="t" x="139.7" y="795.0" textLength="118.4" lengthAdjust="spacingAndGlyphs">SINE(0 141 50 0 0)</text>
<text class="t" x="928.5" y="677.0" textLength="17.0" lengthAdjust="spacingAndGlyphs">V2</text>
<text class="t" x="928.9" y="722.8" textLength="8.4" lengthAdjust="spacingAndGlyphs">5</text>
</svg></body></html>
